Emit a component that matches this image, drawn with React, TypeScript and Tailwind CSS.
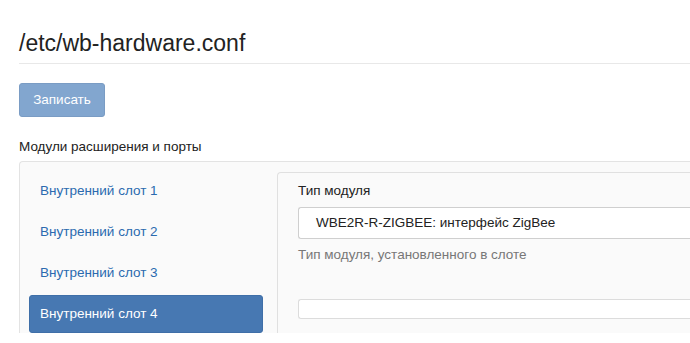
export default function App() {
  const slots = ["Внутренний слот 1", "Внутренний слот 2", "Внутренний слот 3", "Внутренний слот 4"];
  const active = 3;

  return (
    <div className="min-h-screen w-[690px] overflow-hidden bg-white pl-[19px] font-['Liberation_Sans',Arial,sans-serif] text-[#333]">
      <h1 className="pt-[27px] text-[23px] leading-[32px] text-[#222]">/etc/wb-hardware.conf</h1>
      <div className="mt-[4px] border-t border-[#e8e8e8]" />

      <button
        disabled
        className="mt-[19px] h-[34px] w-[86px] rounded-[3px] border border-[#7a9cc4] bg-[#82a6cf] text-[13.5px] text-white"
      >
        Записать
      </button>

      <div className="mt-[20px] text-[13.5px] leading-[20px] text-[#222]">Модули расширения и порты</div>

      <div className="mt-[4px] flex gap-[14px] rounded-tl-[4px] border-l border-t border-[#e3e3e3] bg-[#fafafa] pl-[9px] pt-[10px]">
        <nav className="flex w-[234px] shrink-0 flex-col gap-[3px]">
          {slots.map((s, i) => (
            <a
              key={s}
              className={
                i === active
                  ? "block h-[38px] rounded-[3px] border border-[#3f6fa8] bg-[#4778b2] px-[10px] text-[13.5px] leading-[36px] text-white"
                  : "block h-[38px] px-[11px] text-[13.5px] leading-[37px] text-[#2b6aaf]"
              }
            >
              {s}
            </a>
          ))}
        </nav>

        <div className="flex-1 rounded-tl-[4px] border-l border-t border-[#e0e0e0] bg-[#fafafa] pl-[20px] pt-[8px]">
          <div className="text-[13.5px] leading-[20px] text-[#222]">Тип модуля</div>
          <div className="mt-[6px] h-[32px] rounded-l-[3px] border-y border-l border-[#cfcfcf] bg-white pl-[17px] text-[13.5px] leading-[30px] text-[#222]">
            WBE2R-R-ZIGBEE: интерфейс ZigBee
          </div>
          <div className="mt-[6px] text-[13.5px] leading-[20px] text-[#777]">Тип модуля, установленного в слоте</div>
          <div className="mt-[34px] h-[20px] rounded-l-[3px] border-y border-l border-[#dcdcdc] bg-white" />
        </div>
      </div>
    </div>
  );
}
